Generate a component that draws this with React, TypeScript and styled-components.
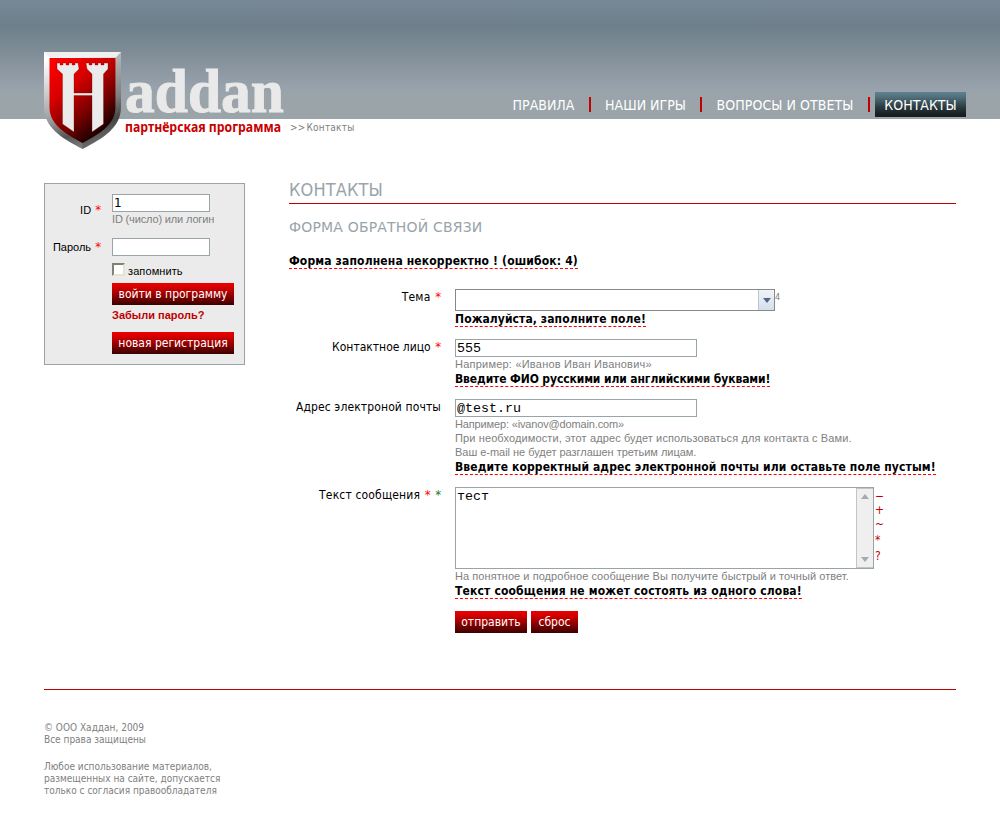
import React from 'react';
import styled, { createGlobalStyle } from 'styled-components';

const tahoma = '"DejaVu Sans Condensed", "DejaVu Sans", sans-serif';
const arial = '"Liberation Sans", Arial, sans-serif';
const mono = '"Liberation Mono", "Courier New", monospace';

const GlobalStyle = createGlobalStyle`
  * { box-sizing: border-box; }
  body { margin: 0; background: #fff; color: #000; font: 12px/16px ${tahoma}; }
  h1, h2, p, form { margin: 0; font-weight: normal; }
`;

const Page = styled.div`
  width: 1000px;
  height: 830px;
  overflow: hidden;
`;

const Header = styled.header`
  height: 119px;
  display: flex;
  justify-content: space-between;
  align-items: flex-start;
  padding: 52px 34px 0 44px;
  background: linear-gradient(#788896 0, #6e7f8b 26px, #7b8993 46px, #98a2ac 88px, #9aa4aa 96px, #9aa4a9 100%);
`;

const Logo = styled.svg`
  display: block;
  flex: none;
  overflow: visible;
`;

const Nav = styled.nav`
  display: flex;
  align-items: center;
  height: 25px;
  margin-top: 40px;
`;

const NavItem = styled.a<{ $w: number; $ls?: number }>`
  width: ${(p) => p.$w}px;
  text-align: center;
  white-space: nowrap;
  font-size: 14px;
  line-height: 25px;
  padding-top: 1px;
  letter-spacing: ${(p) => p.$ls ?? 0}px;
  color: #fff;
`;

const NavActive = styled(NavItem)`
  height: 25px;
  margin-left: 5px;
  background: linear-gradient(#5f8290 0, #50707c 20%, #2b3b40 60%, #171f20 90%);
`;

const NavSeparator = styled.i`
  width: 2px;
  height: 15px;
  background: #c40000;
`;

const Breadcrumb = styled.div`
  height: 64px;
  padding: 2px 0 0 290px;
  font-size: 10px;
  line-height: 14px;
  letter-spacing: 0.2px;
  word-spacing: -2px;
  color: #808080;
`;

const Columns = styled.div`
  display: flex;
  align-items: flex-start;
  gap: 44px;
  height: 506px;
  padding: 0 44px;
`;

const LoginPanel = styled.form`
  flex: none;
  width: 201px;
  height: 182px;
  padding: 10px 0 0 0;
  border: 1px solid #98a4aa;
  background: #ebebeb;
  font: 11px/14px ${arial};
`;

const LoginRow = styled.div<{ $h: number; $pad?: number }>`
  display: grid;
  grid-template-columns: 56px 1fr;
  column-gap: 11px;
  align-items: start;
  height: ${(p) => p.$h}px;
  > :first-child { padding-top: ${(p) => p.$pad ?? 0}px; }
`;

const LoginLabel = styled.label`
  text-align: right;
  white-space: nowrap;
`;

const Star = styled.span<{ $c?: string }>`
  font: 13px/10px ${tahoma};
  letter-spacing: 0;
  margin-left: 1px;
  color: ${(p) => p.$c ?? '#f00'};
`;

const Input = styled.input<{ $w: number; $sans?: boolean }>`
  display: block;
  appearance: none;
  width: ${(p) => p.$w}px;
  height: 18px;
  margin: 0;
  padding: 0 1px;
  border: 1px solid #98a4aa;
  border-radius: 0;
  outline: 0;
  background: #fff;
  color: #000;
  font: ${(p) => (p.$sans ? '12px "DejaVu Sans", sans-serif' : `13.33px ${mono}`)};
`;

const Hint = styled.p<{ $ls?: number }>`
  font: 11px/14px ${arial};
  letter-spacing: ${(p) => p.$ls ?? 0}px;
  color: #808080;
  white-space: nowrap;
`;

const Remember = styled.label`
  display: flex;
  align-items: flex-start;
  gap: 3px;
  height: 20px;
  letter-spacing: 0.1px;
  span { padding-top: 1px; }
`;

const Check = styled.input`
  appearance: none;
  width: 13px;
  height: 13px;
  margin: 0;
  background: #fff;
  border: 2px solid;
  border-color: #808075 #e6e3d2 #e6e3d2 #808075;
`;

const Button = styled.button<{ $w: number }>`
  display: block;
  width: ${(p) => p.$w}px;
  height: 22px;
  padding: 1px 0 0;
  border: 0;
  background: linear-gradient(#ee0000, #c80000 28%, #3a0000);
  color: #fff;
  font: 12px/21px ${tahoma};
  white-space: nowrap;
`;

const Forgot = styled.a`
  display: block;
  height: 27px;
  padding-top: 3px;
  font-weight: bold;
  color: #c00000;
`;

const Main = styled.main`
  flex: 1;
`;

const Title = styled.h1`
  height: 21px;
  border-bottom: 1px solid #c00000;
  font-size: 18px;
  line-height: 14px;
  letter-spacing: 0.1px;
  color: #98a4aa;
`;

const Subtitle = styled.h2`
  margin: 15px 0 18px;
  font: 14px/16px "DejaVu Sans", sans-serif;
  letter-spacing: 0.18px;
  color: #98a4aa;
`;

const Warning = styled.strong<{ $ls: number }>`
  display: block;
  width: fit-content;
  height: 16px;
  border-bottom: 1px dashed #f00;
  font-size: 12px;
  line-height: 17px;
  letter-spacing: ${(p) => p.$ls}px;
  white-space: nowrap;
`;

const Feedback = styled.form`
  display: grid;
  gap: 12px;
  margin-top: 20px;
`;

const Row = styled.div`
  display: grid;
  grid-template-columns: 152px 1fr;
  column-gap: 14px;
`;

const Label = styled.label<{ $ls?: number }>`
  text-align: right;
  white-space: nowrap;
  letter-spacing: ${(p) => p.$ls ?? 0}px;
`;

const Inline = styled.div<{ $gap?: number }>`
  display: flex;
  align-items: flex-start;
  gap: ${(p) => p.$gap ?? 0}px;
`;

const Combo = styled.div`
  display: flex;
  justify-content: flex-end;
  width: 320px;
  height: 22px;
  border: 1px solid #888;
`;

const ComboArrow = styled.span`
  display: flex;
  align-items: center;
  justify-content: center;
  width: 16px;
  border-left: 1px solid #b5c7da;
  background: linear-gradient(#f0f4f8, #d5dfea);
`;

const Note = styled.span`
  font: 9px/16px ${tahoma};
  color: #808080;
`;

const MessageBox = styled.div`
  display: flex;
  width: 419px;
  height: 82px;
  border: 1px solid #98a4aa;
`;

const Message = styled.textarea`
  flex: 1;
  padding: 1px;
  border: 0;
  outline: 0;
  resize: none;
  overflow: hidden;
  color: #000;
  font: 13.33px/15px ${mono};
`;

const Scroll = styled.div`
  display: flex;
  flex-direction: column;
  justify-content: space-between;
  align-items: center;
  width: 17px;
  padding: 5px 0;
  border: 1px solid #c4c4c4;
  border-width: 1px 0 1px 1px;
  background: #efefef;
`;

const Tools = styled.div`
  display: grid;
  grid-template-rows: 14px 14px 16px 16px 16px;
  width: 10px;
  margin-left: 1px;
  padding-top: 2px;
  font: 12px/14px ${tahoma};
  color: #c00000;
`;

const Footer = styled.footer`
  margin: 0 44px;
  padding-top: 32px;
  border-top: 1px solid #c00000;
  font-size: 10px;
  line-height: 12px;
  color: #808080;
  p + p { margin-top: 15px; }
`;

const Triangle = ({ up, fill }: { up?: boolean; fill: string }) => (
  <svg width="8" height="5" viewBox="0 0 8 5">
    <path d={up ? 'M0 5L4 0L8 5Z' : 'M0 0H8L4 5Z'} fill={fill} />
  </svg>
);

const HaddanLogo = () => (
  <Logo width="242" height="97" viewBox="0 0 242 97">
    <defs>
      <linearGradient id="rim" x1="0.3" y1="0" x2="0.6" y2="1">
        <stop offset="0" stopColor="#ffffff" />
        <stop offset="0.3" stopColor="#cfcfcf" />
        <stop offset="0.6" stopColor="#9a9a9a" />
        <stop offset="0.8" stopColor="#555555" />
        <stop offset="1" stopColor="#8a8a8a" />
      </linearGradient>
      <linearGradient id="field" gradientUnits="userSpaceOnUse" x1="6" y1="10" x2="62" y2="78">
        <stop offset="0" stopColor="#ff0000" />
        <stop offset="0.35" stopColor="#d80000" />
        <stop offset="0.7" stopColor="#780000" />
        <stop offset="1" stopColor="#120000" />
      </linearGradient>
    </defs>
    <path d="M0 0H77V55C77 75 60 86 38.500 97C17 86 0 75 0 55Z" fill="url(#rim)" />
    <path d="M0 0H77L72 5H5Z" fill="#f0f0f0" />
    <path d="M77 0V55C77 75 60 86 38.500 97V91C57 81 71.500 72 71.500 55V6Z" fill="#000" opacity="0.18" />
    <path d="M5.500 6H71.500V55C71.500 72 57 81 38.500 91C20 81 5.500 72 5.500 55Z" fill="url(#field)" />
    <path
      d="M13 11H16V13H19V11H22V13H25V11H28V13H31V11H34L35 17L30 22V41H48V22L43 17L42 11H45V13H48V11H51V13H54V11H57V13H60V11H64V17L59.500 22V72L48 80V43.500H30V80L18.500 72V22L13 17Z"
      fill="#ebebeb"
      stroke="#7a0000"
      strokeOpacity="0.45"
      strokeWidth="0.7"
    />
    <text x="81" y="60" fontFamily="Liberation Serif, serif" fontWeight="bold" fontSize="62" fill="#e9e9e9" stroke="#e9e9e9" strokeWidth="1" textLength="159" lengthAdjust="spacingAndGlyphs">addan</text>
    <text x="81" y="80" fontFamily="Noto Sans, sans-serif" fontWeight="bold" fontSize="13.500" fill="#c80000" textLength="156" lengthAdjust="spacingAndGlyphs">партнёрская программа</text>
  </Logo>
);

export default function App() {
  return (
    <Page>
      <GlobalStyle />
      <Header>
        <HaddanLogo />
        <Nav>
          <NavItem $w={91}>ПРАВИЛА</NavItem>
          <NavSeparator />
          <NavItem $w={109}>НАШИ ИГРЫ</NavItem>
          <NavSeparator />
          <NavItem $w={166} $ls={0.07}>ВОПРОСЫ И ОТВЕТЫ</NavItem>
          <NavSeparator />
          <NavActive $w={91}>КОНТАКТЫ</NavActive>
        </Nav>
      </Header>
      <Breadcrumb>&gt;&gt; Контакты</Breadcrumb>

      <Columns>
        <LoginPanel>
          <LoginRow $h={44} $pad={9}>
            <LoginLabel>ID <Star>*</Star></LoginLabel>
            <div>
              <Input $w={98} $sans defaultValue="1" />
              <Hint $ls={-0.15}>ID (число) или логин</Hint>
            </div>
          </LoginRow>
          <LoginRow $h={25} $pad={2}>
            <LoginLabel>Пароль <Star>*</Star></LoginLabel>
            <Input $w={98} $sans type="password" />
          </LoginRow>
          <LoginRow $h={100}>
            <span />
            <div>
              <Remember><Check type="checkbox" /><span>запомнить</span></Remember>
              <Button $w={122} type="button">войти в программу</Button>
              <Forgot>Забыли пароль?</Forgot>
              <Button $w={122} type="button">новая регистрация</Button>
            </div>
          </LoginRow>
        </LoginPanel>

        <Main>
          <Title>КОНТАКТЫ</Title>
          <Subtitle>ФОРМА ОБРАТНОЙ СВЯЗИ</Subtitle>
          <Warning $ls={0.15}>Форма заполнена некорректно ! (ошибок: 4)</Warning>

          <Feedback>
            <Row>
              <Label $ls={0.2}>Тема <Star>*</Star></Label>
              <div>
                <Inline>
                  <Combo><ComboArrow><Triangle fill="#56648a" /></ComboArrow></Combo>
                  <Note>4</Note>
                </Inline>
                <Warning $ls={0.09}>Пожалуйста, заполните поле!</Warning>
              </div>
            </Row>
            <Row>
              <Label>Контактное лицо <Star>*</Star></Label>
              <div>
                <Input $w={242} defaultValue="555" />
                <Hint $ls={0.22}>Например: «Иванов Иван Иванович»</Hint>
                <Warning $ls={-0.11}>Введите ФИО русскими или английскими буквами!</Warning>
              </div>
            </Row>
            <Row>
              <Label $ls={0.12}>Адрес электроной почты</Label>
              <div>
                <Input $w={242} defaultValue="@test.ru" />
                <Hint $ls={-0.15}>Например: «ivanov@domain.com»</Hint>
                <Hint $ls={0.12}>При необходимости, этот адрес будет использоваться для контакта с Вами.</Hint>
                <Hint $ls={-0.03}>Ваш e-mail не будет разглашен третьим лицам.</Hint>
                <Warning $ls={0.12}>Введите корректный адрес электронной почты или оставьте поле пустым!</Warning>
              </div>
            </Row>
            <Row>
              <Label $ls={0.16}>Текст сообщения <Star>*</Star> <Star $c="#108020">*</Star></Label>
              <div>
                <Inline>
                  <MessageBox>
                    <Message defaultValue="тест" />
                    <Scroll><Triangle up fill="#a3abb3" /><Triangle fill="#a3abb3" /></Scroll>
                  </MessageBox>
                  <Tools><span>−</span><span>+</span><span>~</span><span>*</span><span>?</span></Tools>
                </Inline>
                <Hint $ls={0.06}>На понятное и подробное сообщение Вы получите быстрый и точный ответ.</Hint>
                <Warning $ls={0.16}>Текст сообщения не может состоять из одного слова!</Warning>
              </div>
            </Row>
            <Row>
              <span />
              <Inline $gap={4}>
                <Button $w={72} type="button">отправить</Button>
                <Button $w={47} type="button">сброс</Button>
              </Inline>
            </Row>
          </Feedback>
        </Main>
      </Columns>

      <Footer>
        <p>© ООО Хаддан, 2009<br />Все права защищены</p>
        <p>Любое использование материалов,<br />размещенных на сайте, допускается<br />только с согласия правообладателя</p>
      </Footer>
    </Page>
  );
}
